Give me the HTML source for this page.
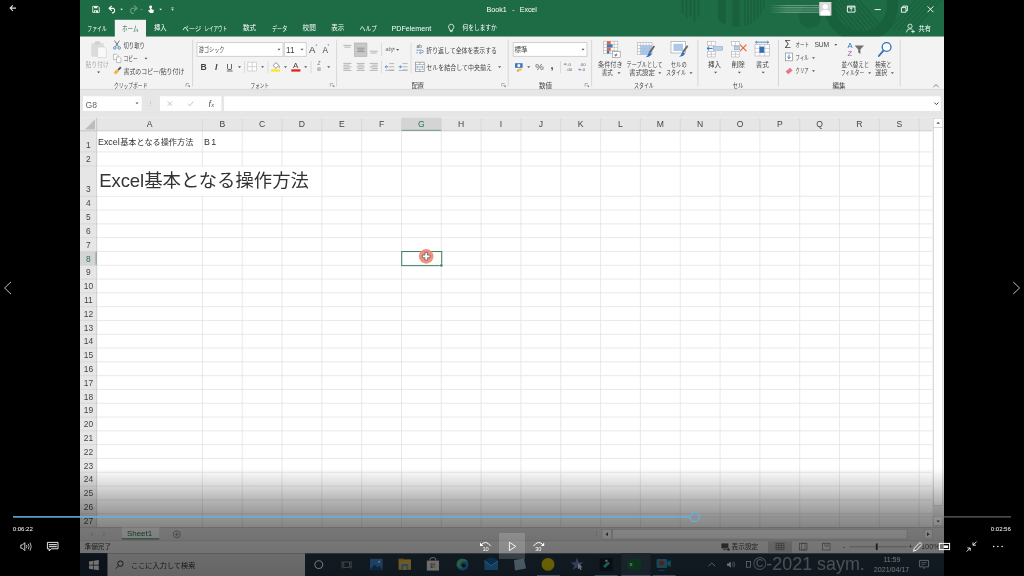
<!DOCTYPE html>
<html lang="ja"><head><meta charset="utf-8"><title>Excel video</title>
<style>
html,body{margin:0;padding:0;background:#000;}
body{width:1024px;height:576px;overflow:hidden;position:relative;font-family:"Liberation Sans","Noto Sans CJK JP",sans-serif;}
#stage{position:absolute;left:0;top:0;width:1024px;height:576px;overflow:hidden;background:#000;}
#stage svg{position:absolute;left:0;top:0;}
svg text{font-family:"Liberation Sans","Noto Sans CJK JP",sans-serif;}

</style></head><body>
<div id="stage">
<svg width="1024" height="576" viewBox="0 0 1024 576">
<defs><filter id="soft" x="0" y="0" width="1024" height="576" filterUnits="userSpaceOnUse" color-interpolation-filters="sRGB"><feGaussianBlur stdDeviation="0.38"/></filter></defs>
<g id="ui" filter="url(#soft)">
<rect x="80.00" y="0.00" width="864.00" height="576.00" fill="#fff"/>
<rect x="80.00" y="0.00" width="864.00" height="36.90" fill="#1e6c46"/>
<g clip-path="url(#tb)"><clipPath id="tb"><rect x="80" y="0" width="864" height="36.9"/></clipPath>
<circle cx="861" cy="5" r="31.5" fill="none" stroke="#19613d" stroke-width="11"/>
<clipPath id="rc"><circle cx="861" cy="5" r="26"/></clipPath><g clip-path="url(#rc)">
<line x1="822.00" y1="0.00" x2="852.00" y2="36.00" stroke="#19613d" stroke-width="1.7"/>
<line x1="826.60" y1="0.00" x2="856.60" y2="36.00" stroke="#19613d" stroke-width="1.7"/>
<line x1="831.20" y1="0.00" x2="861.20" y2="36.00" stroke="#19613d" stroke-width="1.7"/>
<line x1="835.80" y1="0.00" x2="865.80" y2="36.00" stroke="#19613d" stroke-width="1.7"/>
<line x1="840.40" y1="0.00" x2="870.40" y2="36.00" stroke="#19613d" stroke-width="1.7"/>
<line x1="845.00" y1="0.00" x2="875.00" y2="36.00" stroke="#19613d" stroke-width="1.7"/>
<line x1="849.60" y1="0.00" x2="879.60" y2="36.00" stroke="#19613d" stroke-width="1.7"/>
<line x1="854.20" y1="0.00" x2="884.20" y2="36.00" stroke="#19613d" stroke-width="1.7"/>
<line x1="858.80" y1="0.00" x2="888.80" y2="36.00" stroke="#19613d" stroke-width="1.7"/>
</g>
<line x1="916.00" y1="0.00" x2="888.00" y2="30.00" stroke="#19613d" stroke-width="1.8" opacity="0.8"/>
<line x1="921.00" y1="0.00" x2="893.00" y2="30.00" stroke="#19613d" stroke-width="1.8" opacity="0.8"/>
<line x1="926.00" y1="0.00" x2="898.00" y2="30.00" stroke="#19613d" stroke-width="1.8" opacity="0.8"/>
<line x1="931.00" y1="0.00" x2="903.00" y2="30.00" stroke="#19613d" stroke-width="1.8" opacity="0.8"/>
<line x1="936.00" y1="0.00" x2="908.00" y2="30.00" stroke="#19613d" stroke-width="1.8" opacity="0.8"/>
<line x1="941.00" y1="0.00" x2="913.00" y2="30.00" stroke="#19613d" stroke-width="1.8" opacity="0.8"/>
<clipPath id="bc"><circle cx="737" cy="-2" r="29"/></clipPath><g clip-path="url(#bc)">
<rect x="718.00" y="0.00" width="7.60" height="30.00" fill="#19613d"/>
<rect x="732.30" y="0.00" width="7.40" height="30.00" fill="#19613d"/>
<rect x="744.00" y="0.00" width="1.70" height="30.00" fill="#19613d"/>
<rect x="747.20" y="0.00" width="1.70" height="30.00" fill="#19613d"/>
<rect x="750.40" y="0.00" width="1.70" height="30.00" fill="#19613d"/>
<rect x="753.60" y="0.00" width="1.70" height="30.00" fill="#19613d"/>
<rect x="756.80" y="0.00" width="1.70" height="30.00" fill="#19613d"/>
<rect x="760.00" y="0.00" width="1.70" height="30.00" fill="#19613d"/>
<rect x="763.20" y="0.00" width="1.70" height="30.00" fill="#19613d"/>
</g>
<rect x="681.60" y="0.00" width="1.80" height="14.00" fill="#19613d"/>
<rect x="685.60" y="0.00" width="1.80" height="19.00" fill="#19613d"/>
<rect x="689.60" y="0.00" width="1.80" height="16.00" fill="#19613d"/>
<rect x="693.60" y="0.00" width="1.80" height="23.00" fill="#19613d"/>
<rect x="697.60" y="0.00" width="1.80" height="17.00" fill="#19613d"/>
<circle cx="810" cy="17" r="11" fill="#19613d" opacity="0.8"/>
</g>
<g transform="translate(96 9.4) scale(0.86) translate(-96 -9.4)">
<path d="M92.2 5.9h6.2l1.4 1.4v5.6h-7.6z" fill="none" stroke="#fff" stroke-width="0.9" />
<rect x="93.80" y="5.90" width="3.80" height="2.20" fill="#fff"/>
<rect x="93.80" y="10.40" width="4.40" height="2.50" fill="#fff"/>
<rect x="95.00" y="11.00" width="1.10" height="1.90" fill="#1e6c46"/>
</g>
<g transform="translate(112.4 9.3) scale(0.86) translate(-112.4 -9.3)">
<path d="M109 8.2h4.4a2.9 2.9 0 0 1 0 5.2h-1.6" fill="none" stroke="#fff" stroke-width="1.3" />
<path d="M111.6 5.4l-3 2.8 3 2.8" fill="none" stroke="#fff" stroke-width="1.3" />
</g>
<path d="M120.30 8.85h2.60l-1.30 1.50z" fill="#fff" />
<g opacity="0.35">
<path d="M136.6 8.2h-4.4a2.9 2.9 0 0 0 0 5.2h1.6" fill="none" stroke="#fff" stroke-width="1.1" />
<path d="M134 5.4l3 2.8-3 2.8" fill="none" stroke="#fff" stroke-width="1.1" />
<path d="M140.30 8.90h2.40l-1.20 1.40z" fill="#fff" />
</g>
<g transform="translate(150.8 9.3) scale(0.86) translate(-150.8 -9.3)">
<circle cx="150.6" cy="6.6" r="1.7" fill="#fff"/>
<path d="M149.7 6.4v4.2l-1.5-.6-.6.9 2.4 2.6h3.6l.9-3.4-3-.9v-2.8z" fill="#fff" />
</g>
<path d="M159.30 8.85h2.60l-1.30 1.50z" fill="#fff" />
<line x1="171.30" y1="7.90" x2="173.70" y2="7.90" stroke="#fff" stroke-width="0.7"/>
<path d="M171.30 9.30h2.40l-1.20 1.40z" fill="#fff" />
<text x="486.40" y="11.99" font-size="7.2" fill="#fff">Book1</text>
<text x="512.20" y="11.99" font-size="7.2" fill="#fff">-</text>
<text x="519.70" y="11.99" font-size="7.2" fill="#fff" letter-spacing="-0.1">Excel</text>
<line x1="770.00" y1="5.60" x2="819.00" y2="5.60" stroke="#9cc4b0" stroke-width="1.0" opacity="0.6"/>
<line x1="770.00" y1="7.80" x2="819.00" y2="7.80" stroke="#9cc4b0" stroke-width="1.0" opacity="0.75"/>
<line x1="770.00" y1="10.00" x2="819.00" y2="10.00" stroke="#9cc4b0" stroke-width="1.0" opacity="0.6"/>
<line x1="770.00" y1="12.20" x2="819.00" y2="12.20" stroke="#9cc4b0" stroke-width="1.0" opacity="0.75"/>
<linearGradient id="un" x1="0" x2="1"><stop offset="0" stop-color="#1e6c46" stop-opacity="1"/><stop offset="0.35" stop-color="#1e6c46" stop-opacity="0"/></linearGradient>
<rect x="769.00" y="4.00" width="50.00" height="10.00" fill="url(#un)"/>
<rect x="819.20" y="2.00" width="12.20" height="13.60" fill="#d9d9d9"/>
<circle cx="825.3" cy="6.6" r="2.6" fill="#fff"/>
<path d="M820.6 15.6v-2.2q0-3.4 4.7-3.4t4.7 3.4v2.2z" fill="#fff" />
<path d="M847.4 6.1h7.6v6h-7.6z" fill="none" stroke="#fff" stroke-width="0.9" />
<path d="M851.2 7.6v3.2M849.7 9.1l1.5-1.5 1.5 1.5" fill="none" stroke="#fff" stroke-width="0.8" />
<line x1="847.40" y1="7.00" x2="855.00" y2="7.00" stroke="#fff" stroke-width="0.9"/>
<line x1="874.60" y1="9.60" x2="880.80" y2="9.60" stroke="#fff" stroke-width="0.9"/>
<path d="M901.4 7.6h4.6v4.6h-4.6z" fill="none" stroke="#fff" stroke-width="0.9" />
<path d="M902.8 7.4v-1.3h4.6v4.6h-1.3" fill="none" stroke="#fff" stroke-width="0.9" />
<path d="M927.6 6.4l5.8 5.8M933.4 6.4l-5.8 5.8" fill="none" stroke="#fff" stroke-width="0.95" />
<rect x="114.80" y="19.80" width="31.20" height="18.40" fill="#f3f3f3"/>
<text x="87.30" y="30.56" font-size="6.6" fill="#fff" textLength="19.4" lengthAdjust="spacingAndGlyphs">ファイル</text>
<text x="121.90" y="30.56" font-size="6.6" fill="#1e6c46" textLength="16.6" lengthAdjust="spacingAndGlyphs">ホーム</text>
<text x="154.00" y="30.49" font-size="6.6" fill="#fff" textLength="12.6" lengthAdjust="spacingAndGlyphs">挿入</text>
<text x="182.50" y="30.56" font-size="6.6" fill="#fff" textLength="18.8" lengthAdjust="spacingAndGlyphs">ページ</text>
<text x="204.50" y="30.56" font-size="6.6" fill="#fff" textLength="22.5" lengthAdjust="spacingAndGlyphs">レイアウト</text>
<text x="243.00" y="30.49" font-size="6.6" fill="#fff" textLength="13.1" lengthAdjust="spacingAndGlyphs">数式</text>
<text x="272.00" y="30.56" font-size="6.6" fill="#fff" textLength="15.2" lengthAdjust="spacingAndGlyphs">データ</text>
<text x="302.50" y="30.49" font-size="6.6" fill="#fff" textLength="13.3" lengthAdjust="spacingAndGlyphs">校閲</text>
<text x="331.20" y="30.49" font-size="6.6" fill="#fff" textLength="13.1" lengthAdjust="spacingAndGlyphs">表示</text>
<text x="359.80" y="30.56" font-size="6.6" fill="#fff" textLength="17.1" lengthAdjust="spacingAndGlyphs">ヘルプ</text>
<text x="391.50" y="30.57" font-size="7.15" fill="#fff">PDFelement</text>
<path d="M451.2 24.2a2.7 2.7 0 0 1 1.5 4.9v1.3h-3v-1.3a2.7 2.7 0 0 1 1.5-4.9z" fill="none" stroke="#fff" stroke-width="0.8" />
<line x1="450.00" y1="31.60" x2="452.40" y2="31.60" stroke="#fff" stroke-width="0.8"/>
<text x="462.50" y="30.49" font-size="6.6" fill="#fff" textLength="34.3" lengthAdjust="spacingAndGlyphs">何をしますか</text>
<circle cx="910" cy="26.2" r="2.1" fill="none" stroke="#fff" stroke-width="0.8"/>
<path d="M906.4 32.4q.4-3.6 3.6-3.6 1.6 0 2.4.9M913 29.8v3.4M911.3 31.5h3.4" fill="none" stroke="#fff" stroke-width="0.8" />
<text x="918.40" y="30.59" font-size="6.6" fill="#fff" textLength="12.5" lengthAdjust="spacingAndGlyphs">共有</text>
<rect x="80.00" y="36.60" width="864.00" height="52.60" fill="#f3f3f3"/>
<rect x="80.00" y="89.20" width="864.00" height="28.40" fill="#e6e6e6"/>
<line x1="80.00" y1="89.40" x2="944.00" y2="89.40" stroke="#d6d6d6" stroke-width="0.8"/>
<line x1="192.60" y1="39.50" x2="192.60" y2="86.50" stroke="#d4d4d4" stroke-width="0.9"/>
<line x1="336.60" y1="39.50" x2="336.60" y2="86.50" stroke="#d4d4d4" stroke-width="0.9"/>
<line x1="508.20" y1="39.50" x2="508.20" y2="86.50" stroke="#d4d4d4" stroke-width="0.9"/>
<line x1="591.60" y1="39.50" x2="591.60" y2="86.50" stroke="#d4d4d4" stroke-width="0.9"/>
<line x1="697.90" y1="39.50" x2="697.90" y2="86.50" stroke="#d4d4d4" stroke-width="0.9"/>
<line x1="778.50" y1="39.50" x2="778.50" y2="86.50" stroke="#d4d4d4" stroke-width="0.9"/>
<line x1="900.20" y1="39.50" x2="900.20" y2="86.50" stroke="#d4d4d4" stroke-width="0.9"/>
<path d="M189.0 83.5h-3v3" fill="none" stroke="#888" stroke-width="0.6" />
<path d="M187.6 85.1l1.8 1.8" fill="none" stroke="#888" stroke-width="0.6" />
<path d="M190.0 87.5v-1.9h-1.9z" fill="#777" />
<path d="M333.3 83.5h-3v3" fill="none" stroke="#888" stroke-width="0.6" />
<path d="M331.9 85.1l1.8 1.8" fill="none" stroke="#888" stroke-width="0.6" />
<path d="M334.3 87.5v-1.9h-1.9z" fill="#777" />
<path d="M504.7 83.5h-3v3" fill="none" stroke="#888" stroke-width="0.6" />
<path d="M503.3 85.1l1.8 1.8" fill="none" stroke="#888" stroke-width="0.6" />
<path d="M505.7 87.5v-1.9h-1.9z" fill="#777" />
<path d="M588.0 83.5h-3v3" fill="none" stroke="#888" stroke-width="0.6" />
<path d="M586.6 85.1l1.8 1.8" fill="none" stroke="#888" stroke-width="0.6" />
<path d="M589.0 87.5v-1.9h-1.9z" fill="#777" />
<path d="M933.4 87l2.6-2.4 2.6 2.4" fill="none" stroke="#666" stroke-width="0.8" />
<g opacity="0.55">
<rect x="91.20" y="43.20" width="12.60" height="13.60" fill="#c9c9c9" rx="0.8"/>
<rect x="94.80" y="41.20" width="5.40" height="3.20" fill="#b5b5b5" rx="0.8"/>
<path d="M97.6 47h6.4l2.4 2.4v8.2h-8.8z" fill="#fff" stroke="#b9b9b9" stroke-width="0.7" />
</g>
<text x="85.80" y="66.92" font-size="6.4" fill="#a9a9a9" textLength="22.9" lengthAdjust="spacingAndGlyphs">貼り付け</text>
<path d="M97.10 71.55h3.00l-1.50 1.70z" fill="#555" />
<path d="M114.6 40.6l3.8 6M119.4 40.6l-3.8 6" fill="none" stroke="#555" stroke-width="0.8" />
<circle cx="114.8" cy="47.9" r="1.3" fill="none" stroke="#3b78c4" stroke-width="0.8"/><circle cx="119.2" cy="47.9" r="1.3" fill="none" stroke="#3b78c4" stroke-width="0.8"/>
<text x="123.50" y="48.02" font-size="6.4" fill="#444" textLength="21.3" lengthAdjust="spacingAndGlyphs">切り取り</text>
<path d="M113.6 54.2h3l1.4 1.4v4h-4.4z" fill="#fff" stroke="#999" stroke-width="0.6" />
<path d="M116.6 57h3l1.4 1.4v4.2h-4.4z" fill="#fff" stroke="#999" stroke-width="0.6" />
<text x="123.50" y="61.12" font-size="6.4" fill="#444" textLength="14.1" lengthAdjust="spacingAndGlyphs">コピー</text>
<path d="M144.50 57.75h3.00l-1.50 1.70z" fill="#555" />
<path d="M113.6 72.2l3.6-3.2 2 2.2-3.6 3.2z" fill="#f0b54a" />
<path d="M117.6 69.2l2.6-2.6 1.3 1.3-2.6 2.6z" fill="#555" />
<text x="123.50" y="74.32" font-size="6.4" fill="#444" textLength="60.8" lengthAdjust="spacingAndGlyphs">書式のコピー/貼り付け</text>
<text x="114.00" y="87.82" font-size="6.4" fill="#444" textLength="33.4" lengthAdjust="spacingAndGlyphs">クリップボード</text>
<rect x="197.00" y="42.60" width="86.00" height="13.70" fill="#fff" stroke="#c6c6c6" stroke-width="0.8"/>
<text x="198.80" y="52.22" font-size="6.4" fill="#444" textLength="25.7" lengthAdjust="spacingAndGlyphs">游ゴシック</text>
<path d="M277.50 48.85h3.00l-1.50 1.70z" fill="#555" />
<rect x="284.30" y="42.60" width="21.90" height="13.70" fill="#fff" stroke="#c6c6c6" stroke-width="0.8"/>
<text x="286.00" y="52.75" font-size="8.2" fill="#444" font-family="Liberation Serif">11</text>
<path d="M300.50 48.85h3.00l-1.50 1.70z" fill="#555" />
<text x="309.00" y="53.36" font-size="9.6" fill="#444">A</text>
<path d="M316.4 44.2l1 1.4h-2z" fill="#3b78c4" />
<text x="322.40" y="53.35" font-size="8.2" fill="#444">A</text>
<path d="M328.4 45.8l1-1.4h-2z" fill="#3b78c4" />
<text x="200.60" y="69.90" font-size="8.6" fill="#444" font-weight="bold">B</text>
<text x="214.90" y="69.90" font-size="8.6" fill="#444" font-weight="bold" font-style="italic" font-family="Liberation Serif">I</text>
<text x="226.60" y="69.52" font-size="8.4" fill="#444">U</text>
<line x1="226.80" y1="71.00" x2="232.60" y2="71.00" stroke="#444" stroke-width="0.8"/>
<path d="M238.00 66.35h3.00l-1.50 1.70z" fill="#555" />
<line x1="244.50" y1="61.00" x2="244.50" y2="73.00" stroke="#d4d4d4" stroke-width="0.8"/>
<rect x="247.80" y="62.20" width="8.80" height="8.80" fill="#fff" stroke="#c4c4c4" stroke-width="0.7"/>
<line x1="252.20" y1="62.20" x2="252.20" y2="71.00" stroke="#c4c4c4" stroke-width="0.7"/>
<line x1="247.80" y1="66.60" x2="256.60" y2="66.60" stroke="#c4c4c4" stroke-width="0.7"/>
<path d="M261.10 66.35h3.00l-1.50 1.70z" fill="#555" />
<line x1="268.00" y1="61.00" x2="268.00" y2="73.00" stroke="#d4d4d4" stroke-width="0.8"/>
<path d="M273.2 65.6l2.6-3 3 2.8-2.8 3z" fill="#fff" stroke="#666" stroke-width="0.7" />
<path d="M279.4 65.8q1 1.5 0 2.2-1-.7 0-2.2z" fill="#3b78c4" />
<rect x="271.00" y="69.30" width="9.10" height="2.30" fill="#ffe61a"/>
<path d="M284.00 66.35h3.00l-1.50 1.70z" fill="#555" />
<text x="293.10" y="68.08" font-size="8.0" fill="#444">A</text>
<rect x="291.30" y="69.30" width="9.10" height="2.30" fill="#e8201c"/>
<path d="M304.20 66.35h3.00l-1.50 1.70z" fill="#555" />
<line x1="311.00" y1="61.00" x2="311.00" y2="73.00" stroke="#d4d4d4" stroke-width="0.8"/>
<text x="317.60" y="65.46" font-size="4.6" fill="#777" font-style="italic">Z</text>
<rect x="317.20" y="67.20" width="3.60" height="3.80" fill="#bdbdbd"/>
<path d="M327.20 66.35h3.00l-1.50 1.70z" fill="#555" />
<text x="250.60" y="87.82" font-size="6.4" fill="#444" textLength="18.3" lengthAdjust="spacingAndGlyphs">フォント</text>
<line x1="343.40" y1="45.40" x2="351.40" y2="45.40" stroke="#a6a6a6" stroke-width="0.8"/>
<line x1="344.40" y1="47.20" x2="350.40" y2="47.20" stroke="#a6a6a6" stroke-width="0.8"/>
<rect x="354.60" y="43.00" width="12.30" height="13.30" fill="#c8c8c8" stroke="#aaa" stroke-width="0.6"/>
<line x1="356.80" y1="48.20" x2="364.80" y2="48.20" stroke="#8a8a8a" stroke-width="0.8"/>
<line x1="357.80" y1="49.90" x2="363.80" y2="49.90" stroke="#8a8a8a" stroke-width="0.8"/>
<line x1="356.80" y1="51.60" x2="364.80" y2="51.60" stroke="#8a8a8a" stroke-width="0.8"/>
<line x1="369.80" y1="51.20" x2="377.80" y2="51.20" stroke="#a6a6a6" stroke-width="0.8"/>
<line x1="370.80" y1="53.00" x2="376.80" y2="53.00" stroke="#a6a6a6" stroke-width="0.8"/>
<line x1="381.50" y1="43.00" x2="381.50" y2="56.00" stroke="#d4d4d4" stroke-width="0.8"/>
<text x="385.60" y="51.22" font-size="5.6" fill="#666" font-style="italic">ab</text>
<path d="M391.4 52.6l2.6-4.6M394 48l-1.6.5M394 48l.2 1.6" fill="none" stroke="#777" stroke-width="0.7" />
<path d="M396.10 48.95h3.00l-1.50 1.70z" fill="#555" />
<line x1="411.00" y1="43.00" x2="411.00" y2="73.00" stroke="#d4d4d4" stroke-width="0.8"/>
<text x="416.60" y="47.93" font-size="4.8" fill="#555">ab</text>
<path d="M416.4 50.2h5.2q1.6 0 1.6 1.3t-1.6 1.3h-1.6" fill="none" stroke="#3b78c4" stroke-width="0.7" />
<path d="M420.8 51.6l-1.4 1.2 1.4 1.2" fill="none" stroke="#3b78c4" stroke-width="0.7" />
<line x1="416.40" y1="52.80" x2="418.00" y2="52.80" stroke="#777" stroke-width="0.7"/>
<text x="426.30" y="52.52" font-size="6.4" fill="#444" textLength="70.7" lengthAdjust="spacingAndGlyphs">折り返して全体を表示する</text>
<line x1="343.40" y1="63.40" x2="351.40" y2="63.40" stroke="#a6a6a6" stroke-width="0.8"/>
<line x1="343.40" y1="65.15" x2="349.40" y2="65.15" stroke="#a6a6a6" stroke-width="0.8"/>
<line x1="343.40" y1="66.90" x2="351.40" y2="66.90" stroke="#a6a6a6" stroke-width="0.8"/>
<line x1="343.40" y1="68.65" x2="349.40" y2="68.65" stroke="#a6a6a6" stroke-width="0.8"/>
<line x1="343.40" y1="70.40" x2="351.40" y2="70.40" stroke="#a6a6a6" stroke-width="0.8"/>
<line x1="356.70" y1="63.40" x2="364.70" y2="63.40" stroke="#a6a6a6" stroke-width="0.8"/>
<line x1="357.70" y1="65.15" x2="363.70" y2="65.15" stroke="#a6a6a6" stroke-width="0.8"/>
<line x1="356.70" y1="66.90" x2="364.70" y2="66.90" stroke="#a6a6a6" stroke-width="0.8"/>
<line x1="357.70" y1="68.65" x2="363.70" y2="68.65" stroke="#a6a6a6" stroke-width="0.8"/>
<line x1="356.70" y1="70.40" x2="364.70" y2="70.40" stroke="#a6a6a6" stroke-width="0.8"/>
<line x1="369.70" y1="63.40" x2="377.70" y2="63.40" stroke="#a6a6a6" stroke-width="0.8"/>
<line x1="371.70" y1="65.15" x2="377.70" y2="65.15" stroke="#a6a6a6" stroke-width="0.8"/>
<line x1="369.70" y1="66.90" x2="377.70" y2="66.90" stroke="#a6a6a6" stroke-width="0.8"/>
<line x1="371.70" y1="68.65" x2="377.70" y2="68.65" stroke="#a6a6a6" stroke-width="0.8"/>
<line x1="369.70" y1="70.40" x2="377.70" y2="70.40" stroke="#a6a6a6" stroke-width="0.8"/>
<line x1="381.50" y1="61.00" x2="381.50" y2="73.00" stroke="#d4d4d4" stroke-width="0.8"/>
<line x1="389.20" y1="63.60" x2="394.20" y2="63.60" stroke="#a6a6a6" stroke-width="0.8"/>
<line x1="389.20" y1="66.80" x2="394.20" y2="66.80" stroke="#a6a6a6" stroke-width="0.8"/>
<line x1="389.20" y1="70.00" x2="394.20" y2="70.00" stroke="#a6a6a6" stroke-width="0.8"/>
<line x1="385.40" y1="70.40" x2="394.20" y2="70.40" stroke="#a6a6a6" stroke-width="0.8"/>
<path d="M388.4 66.8h-3M386.6 65.4l-1.5 1.4 1.5 1.4" fill="none" stroke="#3b78c4" stroke-width="0.8" />
<line x1="402.60" y1="63.60" x2="407.60" y2="63.60" stroke="#a6a6a6" stroke-width="0.8"/>
<line x1="402.60" y1="66.80" x2="407.60" y2="66.80" stroke="#a6a6a6" stroke-width="0.8"/>
<line x1="402.60" y1="70.00" x2="407.60" y2="70.00" stroke="#a6a6a6" stroke-width="0.8"/>
<line x1="398.60" y1="70.40" x2="407.60" y2="70.40" stroke="#a6a6a6" stroke-width="0.8"/>
<path d="M398.6 66.8h3M399.9 65.4l1.5 1.4-1.5 1.4" fill="none" stroke="#3b78c4" stroke-width="0.8" />
<rect x="415.40" y="62.20" width="8.80" height="9.40" fill="#fff" stroke="#8c8c8c" stroke-width="0.7"/>
<line x1="415.40" y1="64.60" x2="424.20" y2="64.60" stroke="#8c8c8c" stroke-width="0.6"/>
<line x1="415.40" y1="69.20" x2="424.20" y2="69.20" stroke="#8c8c8c" stroke-width="0.6"/>
<line x1="419.80" y1="62.20" x2="419.80" y2="64.60" stroke="#8c8c8c" stroke-width="0.6"/>
<line x1="419.80" y1="69.20" x2="419.80" y2="71.60" stroke="#8c8c8c" stroke-width="0.6"/>
<path d="M416.6 66.9h6.4M417.6 66l-1 .9 1 .9M422 66l1 .9-1 .9" fill="none" stroke="#3b78c4" stroke-width="0.6" />
<text x="426.30" y="69.52" font-size="6.4" fill="#444" textLength="65.6" lengthAdjust="spacingAndGlyphs">セルを結合して中央揃え</text>
<path d="M498.10 66.35h3.00l-1.50 1.70z" fill="#555" />
<text x="411.40" y="87.82" font-size="6.4" fill="#444" textLength="12.5" lengthAdjust="spacingAndGlyphs">配置</text>
<rect x="513.20" y="42.60" width="73.80" height="13.70" fill="#fff" stroke="#c6c6c6" stroke-width="0.8"/>
<text x="514.60" y="52.22" font-size="6.4" fill="#444" textLength="13.0" lengthAdjust="spacingAndGlyphs">標準</text>
<path d="M581.50 48.85h3.00l-1.50 1.70z" fill="#555" />
<rect x="515.00" y="63.20" width="7.60" height="4.60" fill="#3b78c4"/>
<ellipse cx="518.8" cy="65.5" rx="1.5" ry="1.6" fill="#fff"/>
<circle cx="520.2" cy="69.6" r="1.5" fill="#f0c36a"/><circle cx="518" cy="70.6" r="1.3" fill="#e7b04e"/>
<path d="M527.20 66.35h3.00l-1.50 1.70z" fill="#555" />
<text x="535.20" y="70.36" font-size="9.6" fill="#555">%</text>
<text x="550.60" y="68.56" font-size="11" fill="#444" font-weight="bold" font-family="Liberation Serif">,</text>
<line x1="560.50" y1="61.00" x2="560.50" y2="73.00" stroke="#d4d4d4" stroke-width="0.8"/>
<text x="567.20" y="65.78" font-size="4.4" fill="#666">.0</text>
<text x="566.20" y="71.18" font-size="4.4" fill="#666">.00</text>
<path d="M564.4 64.2h2.4M565.3 63.2l-1 1 1 1" fill="none" stroke="#3b78c4" stroke-width="0.7" />
<text x="579.60" y="65.78" font-size="4.4" fill="#666">.00</text>
<text x="581.60" y="71.18" font-size="4.4" fill="#666">.0</text>
<path d="M578.2 69.6h2.6M579.9 68.6l1 1-1 1" fill="none" stroke="#3b78c4" stroke-width="0.7" />
<text x="539.00" y="87.82" font-size="6.4" fill="#444" textLength="13.0" lengthAdjust="spacingAndGlyphs">数値</text>
<rect x="603.40" y="41.20" width="14.40" height="12.40" fill="#fff" stroke="#b0b0b0" stroke-width="0.6"/>
<line x1="607.00" y1="41.20" x2="607.00" y2="53.60" stroke="#b0b0b0" stroke-width="0.6"/>
<line x1="610.60" y1="41.20" x2="610.60" y2="53.60" stroke="#b0b0b0" stroke-width="0.6"/>
<line x1="614.20" y1="41.20" x2="614.20" y2="53.60" stroke="#b0b0b0" stroke-width="0.6"/>
<line x1="603.40" y1="44.30" x2="617.80" y2="44.30" stroke="#b0b0b0" stroke-width="0.6"/>
<line x1="603.40" y1="47.40" x2="617.80" y2="47.40" stroke="#b0b0b0" stroke-width="0.6"/>
<line x1="603.40" y1="50.50" x2="617.80" y2="50.50" stroke="#b0b0b0" stroke-width="0.6"/>
<rect x="607.00" y="41.20" width="3.60" height="3.10" fill="#e8613c"/>
<rect x="607.00" y="44.30" width="5.60" height="3.10" fill="#3b78c4"/>
<rect x="607.00" y="47.40" width="3.60" height="3.10" fill="#e8613c"/>
<rect x="607.00" y="50.50" width="2.40" height="3.10" fill="#3b78c4"/>
<rect x="612.60" y="51.60" width="7.60" height="5.80" fill="#fff" stroke="#8a8a8a" stroke-width="0.6"/>
<text x="614.40" y="56.54" font-size="5.4" fill="#444">≠</text>
<text x="598.10" y="67.12" font-size="6.4" fill="#444" textLength="24.4" lengthAdjust="spacingAndGlyphs">条件付き</text>
<text x="601.70" y="75.42" font-size="6.4" fill="#444" textLength="11.0" lengthAdjust="spacingAndGlyphs">書式</text>
<path d="M617.50 72.25h3.00l-1.50 1.70z" fill="#555" />
<rect x="637.40" y="42.40" width="14.60" height="12.20" fill="#fff" stroke="#b0b0b0" stroke-width="0.6"/>
<line x1="640.32" y1="42.40" x2="640.32" y2="54.60" stroke="#b0b0b0" stroke-width="0.6"/>
<line x1="643.24" y1="42.40" x2="643.24" y2="54.60" stroke="#b0b0b0" stroke-width="0.6"/>
<line x1="646.16" y1="42.40" x2="646.16" y2="54.60" stroke="#b0b0b0" stroke-width="0.6"/>
<line x1="649.08" y1="42.40" x2="649.08" y2="54.60" stroke="#b0b0b0" stroke-width="0.6"/>
<line x1="637.40" y1="45.45" x2="652.00" y2="45.45" stroke="#b0b0b0" stroke-width="0.6"/>
<line x1="637.40" y1="48.50" x2="652.00" y2="48.50" stroke="#b0b0b0" stroke-width="0.6"/>
<line x1="637.40" y1="51.55" x2="652.00" y2="51.55" stroke="#b0b0b0" stroke-width="0.6"/>
<rect x="640.30" y="45.40" width="11.70" height="9.20" fill="#9cc0e6" opacity="0.85"/>
<path d="M648.8 52l4.8-6.4 1.4 1-4.6 6.6z" fill="#666" />
<path d="M645.2 57.2q2.4-.4 3.6-5l2.8 1.8q-1.6 3.2-6.4 3.2z" fill="#2f6fbd" />
<text x="626.50" y="67.12" font-size="6.4" fill="#444" textLength="36.0" lengthAdjust="spacingAndGlyphs">テーブルとして</text>
<text x="629.00" y="75.42" font-size="6.4" fill="#444" textLength="25.9" lengthAdjust="spacingAndGlyphs">書式設定</text>
<path d="M658.30 72.25h3.00l-1.50 1.70z" fill="#555" />
<rect x="671.00" y="41.60" width="14.40" height="11.40" fill="#fff" stroke="#9a9a9a" stroke-width="0.6"/>
<rect x="673.40" y="43.80" width="9.60" height="7.20" fill="#a9c8ea"/>
<path d="M682.2 51.6l4.8-6.4 1.4 1-4.6 6.6z" fill="#666" />
<path d="M678.6 56.8q2.4-.4 3.6-5l2.8 1.8q-1.6 3.2-6.4 3.2z" fill="#2f6fbd" />
<text x="670.80" y="67.12" font-size="6.4" fill="#444" textLength="15.9" lengthAdjust="spacingAndGlyphs">セルの</text>
<text x="665.90" y="75.42" font-size="6.4" fill="#444" textLength="20.2" lengthAdjust="spacingAndGlyphs">スタイル</text>
<path d="M689.50 72.25h3.00l-1.50 1.70z" fill="#555" />
<text x="634.00" y="87.82" font-size="6.4" fill="#444" textLength="19.8" lengthAdjust="spacingAndGlyphs">スタイル</text>
<rect x="707.60" y="41.40" width="7.60" height="4.20" fill="#fff" stroke="#b0b0b0" stroke-width="0.6"/>
<line x1="711.40" y1="41.40" x2="711.40" y2="45.60" stroke="#b0b0b0" stroke-width="0.6"/>
<rect x="707.60" y="51.60" width="7.60" height="5.40" fill="#fff" stroke="#b0b0b0" stroke-width="0.6"/>
<line x1="711.40" y1="51.60" x2="711.40" y2="57.00" stroke="#b0b0b0" stroke-width="0.6"/>
<line x1="707.60" y1="54.30" x2="715.20" y2="54.30" stroke="#b0b0b0" stroke-width="0.6"/>
<rect x="713.40" y="46.60" width="9.20" height="3.60" fill="#b8d2ec" stroke="#7a9cc4" stroke-width="0.5"/>
<path d="M712.6 48.4h-5.6M709.2 46.4l-2.2 2 2.2 2" fill="none" stroke="#2f6fbd" stroke-width="1.0" />
<text x="707.90" y="66.92" font-size="6.4" fill="#444" textLength="13.0" lengthAdjust="spacingAndGlyphs">挿入</text>
<path d="M714.10 71.75h3.00l-1.50 1.70z" fill="#555" />
<rect x="731.60" y="41.40" width="7.60" height="4.20" fill="#fff" stroke="#b0b0b0" stroke-width="0.6"/>
<line x1="735.40" y1="41.40" x2="735.40" y2="45.60" stroke="#b0b0b0" stroke-width="0.6"/>
<rect x="731.60" y="51.60" width="7.60" height="5.40" fill="#fff" stroke="#b0b0b0" stroke-width="0.6"/>
<line x1="735.40" y1="51.60" x2="735.40" y2="57.00" stroke="#b0b0b0" stroke-width="0.6"/>
<line x1="731.60" y1="54.30" x2="739.20" y2="54.30" stroke="#b0b0b0" stroke-width="0.6"/>
<rect x="734.40" y="46.20" width="5.20" height="3.60" fill="#b8d2ec" stroke="#7a9cc4" stroke-width="0.5"/>
<path d="M740 44.6l6.4 6.6M746.4 44.6l-6.4 6.6" fill="none" stroke="#e8613c" stroke-width="1.1" />
<text x="731.60" y="66.92" font-size="6.4" fill="#444" textLength="13.4" lengthAdjust="spacingAndGlyphs">削除</text>
<path d="M737.90 71.75h3.00l-1.50 1.70z" fill="#555" />
<rect x="755.00" y="44.60" width="14.60" height="11.40" fill="#fff" stroke="#b0b0b0" stroke-width="0.6"/>
<line x1="759.87" y1="44.60" x2="759.87" y2="56.00" stroke="#b0b0b0" stroke-width="0.6"/>
<line x1="764.73" y1="44.60" x2="764.73" y2="56.00" stroke="#b0b0b0" stroke-width="0.6"/>
<line x1="755.00" y1="48.40" x2="769.60" y2="48.40" stroke="#b0b0b0" stroke-width="0.6"/>
<line x1="755.00" y1="52.20" x2="769.60" y2="52.20" stroke="#b0b0b0" stroke-width="0.6"/>
<rect x="759.40" y="46.60" width="4.80" height="6.20" fill="#2f6fbd"/>
<path d="M755.6 42.2h13M757 41l-1.4 1.2 1.4 1.2M767.2 41l1.4 1.2-1.4 1.2" fill="none" stroke="#2f6fbd" stroke-width="0.8" />
<text x="755.80" y="66.92" font-size="6.4" fill="#444" textLength="13.0" lengthAdjust="spacingAndGlyphs">書式</text>
<path d="M761.70 71.75h3.00l-1.50 1.70z" fill="#555" />
<text x="732.40" y="87.82" font-size="6.4" fill="#444" textLength="11.0" lengthAdjust="spacingAndGlyphs">セル</text>
<text x="784.60" y="48.34" font-size="10.4" fill="#444">Σ</text>
<text x="795.60" y="47.42" font-size="6.4" fill="#444" textLength="13.3" lengthAdjust="spacingAndGlyphs">オート</text>
<text x="814.40" y="47.31" font-size="6.7" fill="#444" letter-spacing="-0.15">SUM</text>
<path d="M834.30 44.05h3.00l-1.50 1.70z" fill="#555" />
<rect x="785.40" y="53.00" width="7.20" height="7.80" fill="#fff" stroke="#8a8a8a" stroke-width="0.7"/>
<path d="M789 54.6v4M787.4 57l1.6 1.6 1.6-1.6" fill="none" stroke="#2f6fbd" stroke-width="0.9" />
<text x="795.60" y="60.42" font-size="6.4" fill="#444" textLength="13.1" lengthAdjust="spacingAndGlyphs">フィル</text>
<path d="M812.00 57.25h3.00l-1.50 1.70z" fill="#555" />
<path d="M785.6 71.6l4.4-3.8 2.6 2.6-4.4 3.8z" fill="#e8758c" />
<text x="795.60" y="73.42" font-size="6.4" fill="#444" textLength="12.9" lengthAdjust="spacingAndGlyphs">クリア</text>
<path d="M812.00 70.25h3.00l-1.50 1.70z" fill="#555" />
<text x="847.40" y="47.94" font-size="7.6" fill="#2f6fbd">A</text>
<text x="847.60" y="55.54" font-size="7.6" fill="#9a57b5">Z</text>
<path d="M854.6 45.4h9.4l-3.6 4v4.6l-2.2-1.4v-3.2z" fill="#707070" />
<text x="841.60" y="67.12" font-size="6.4" fill="#444" textLength="27.8" lengthAdjust="spacingAndGlyphs">並べ替えと</text>
<text x="841.00" y="75.42" font-size="6.4" fill="#444" textLength="23.1" lengthAdjust="spacingAndGlyphs">フィルター</text>
<path d="M868.10 72.25h3.00l-1.50 1.70z" fill="#555" />
<circle cx="886.6" cy="47" r="4.4" fill="#fff" stroke="#2f6fbd" stroke-width="1.3"/>
<line x1="883.40" y1="50.60" x2="878.80" y2="56.00" stroke="#2f6fbd" stroke-width="1.8" stroke-linecap="round"/>
<text x="875.30" y="67.12" font-size="6.4" fill="#444" textLength="16.5" lengthAdjust="spacingAndGlyphs">検索と</text>
<text x="875.30" y="75.42" font-size="6.4" fill="#444" textLength="11.8" lengthAdjust="spacingAndGlyphs">選択</text>
<path d="M890.90 72.25h3.00l-1.50 1.70z" fill="#555" />
<text x="832.50" y="87.82" font-size="6.4" fill="#444" textLength="12.9" lengthAdjust="spacingAndGlyphs">編集</text>
<rect x="83.00" y="96.30" width="58.60" height="14.60" fill="#fff"/>
<text x="85.60" y="108.10" font-size="8.6" fill="#666">G8</text>
<path d="M135.50 102.55h3.00l-1.50 1.70z" fill="#555" />
<circle cx="150.4" cy="101.6" r="0.45" fill="#999"/>
<circle cx="150.4" cy="103.5" r="0.45" fill="#999"/>
<circle cx="150.4" cy="105.4" r="0.45" fill="#999"/>
<rect x="159.90" y="96.30" width="61.40" height="14.60" fill="#fff"/>
<path d="M167.6 101.4l4.4 4.4M172 101.4l-4.4 4.4" fill="none" stroke="#b5b5b5" stroke-width="0.8" />
<path d="M188 103.8l1.8 2 3.6-4.4" fill="none" stroke="#b5b5b5" stroke-width="0.8" />
<text x="208.60" y="106.70" font-size="8.6" fill="#555" font-style="italic" font-family="Liberation Serif">f</text>
<text x="211.20" y="106.82" font-size="5.6" fill="#555" font-style="italic" font-family="Liberation Serif">x</text>
<rect x="224.10" y="96.30" width="716.60" height="14.60" fill="#fff"/>
<path d="M934.4 102.6l2 2 2-2" fill="none" stroke="#444" stroke-width="1.0" />
<rect x="80.00" y="117.60" width="864.00" height="13.20" fill="#e6e6e6"/>
<rect x="80.00" y="117.60" width="16.70" height="410.00" fill="#e6e6e6"/>
<rect x="96.70" y="130.80" width="835.70" height="396.70" fill="#fff"/>
<rect x="401.50" y="117.60" width="39.82" height="13.20" fill="#d4d4d4"/>
<line x1="401.50" y1="130.40" x2="441.32" y2="130.40" stroke="#217346" stroke-width="1.0"/>
<rect x="80.00" y="251.45" width="16.70" height="13.80" fill="#d4d4d4"/>
<line x1="96.30" y1="251.45" x2="96.30" y2="265.25" stroke="#217346" stroke-width="1.0"/>
<line x1="202.40" y1="130.80" x2="202.40" y2="527.50" stroke="#e3e3e3" stroke-width="0.8"/>
<line x1="242.22" y1="130.80" x2="242.22" y2="527.50" stroke="#e3e3e3" stroke-width="0.8"/>
<line x1="282.04" y1="130.80" x2="282.04" y2="527.50" stroke="#e3e3e3" stroke-width="0.8"/>
<line x1="321.86" y1="130.80" x2="321.86" y2="527.50" stroke="#e3e3e3" stroke-width="0.8"/>
<line x1="361.68" y1="130.80" x2="361.68" y2="527.50" stroke="#e3e3e3" stroke-width="0.8"/>
<line x1="401.50" y1="130.80" x2="401.50" y2="527.50" stroke="#e3e3e3" stroke-width="0.8"/>
<line x1="441.32" y1="130.80" x2="441.32" y2="527.50" stroke="#e3e3e3" stroke-width="0.8"/>
<line x1="481.14" y1="130.80" x2="481.14" y2="527.50" stroke="#e3e3e3" stroke-width="0.8"/>
<line x1="520.96" y1="130.80" x2="520.96" y2="527.50" stroke="#e3e3e3" stroke-width="0.8"/>
<line x1="560.78" y1="130.80" x2="560.78" y2="527.50" stroke="#e3e3e3" stroke-width="0.8"/>
<line x1="600.60" y1="130.80" x2="600.60" y2="527.50" stroke="#e3e3e3" stroke-width="0.8"/>
<line x1="640.42" y1="130.80" x2="640.42" y2="527.50" stroke="#e3e3e3" stroke-width="0.8"/>
<line x1="680.24" y1="130.80" x2="680.24" y2="527.50" stroke="#e3e3e3" stroke-width="0.8"/>
<line x1="720.06" y1="130.80" x2="720.06" y2="527.50" stroke="#e3e3e3" stroke-width="0.8"/>
<line x1="759.88" y1="130.80" x2="759.88" y2="527.50" stroke="#e3e3e3" stroke-width="0.8"/>
<line x1="799.70" y1="130.80" x2="799.70" y2="527.50" stroke="#e3e3e3" stroke-width="0.8"/>
<line x1="839.52" y1="130.80" x2="839.52" y2="527.50" stroke="#e3e3e3" stroke-width="0.8"/>
<line x1="879.34" y1="130.80" x2="879.34" y2="527.50" stroke="#e3e3e3" stroke-width="0.8"/>
<line x1="919.16" y1="130.80" x2="919.16" y2="527.50" stroke="#e3e3e3" stroke-width="0.8"/>
<line x1="96.70" y1="151.90" x2="932.40" y2="151.90" stroke="#e3e3e3" stroke-width="0.8"/>
<line x1="96.70" y1="166.00" x2="932.40" y2="166.00" stroke="#e3e3e3" stroke-width="0.8"/>
<line x1="96.70" y1="196.25" x2="932.40" y2="196.25" stroke="#e3e3e3" stroke-width="0.8"/>
<line x1="96.70" y1="210.05" x2="932.40" y2="210.05" stroke="#e3e3e3" stroke-width="0.8"/>
<line x1="96.70" y1="223.85" x2="932.40" y2="223.85" stroke="#e3e3e3" stroke-width="0.8"/>
<line x1="96.70" y1="237.65" x2="932.40" y2="237.65" stroke="#e3e3e3" stroke-width="0.8"/>
<line x1="96.70" y1="251.45" x2="932.40" y2="251.45" stroke="#e3e3e3" stroke-width="0.8"/>
<line x1="96.70" y1="265.25" x2="932.40" y2="265.25" stroke="#e3e3e3" stroke-width="0.8"/>
<line x1="96.70" y1="279.05" x2="932.40" y2="279.05" stroke="#e3e3e3" stroke-width="0.8"/>
<line x1="96.70" y1="292.85" x2="932.40" y2="292.85" stroke="#e3e3e3" stroke-width="0.8"/>
<line x1="96.70" y1="306.65" x2="932.40" y2="306.65" stroke="#e3e3e3" stroke-width="0.8"/>
<line x1="96.70" y1="320.45" x2="932.40" y2="320.45" stroke="#e3e3e3" stroke-width="0.8"/>
<line x1="96.70" y1="334.25" x2="932.40" y2="334.25" stroke="#e3e3e3" stroke-width="0.8"/>
<line x1="96.70" y1="348.05" x2="932.40" y2="348.05" stroke="#e3e3e3" stroke-width="0.8"/>
<line x1="96.70" y1="361.85" x2="932.40" y2="361.85" stroke="#e3e3e3" stroke-width="0.8"/>
<line x1="96.70" y1="375.65" x2="932.40" y2="375.65" stroke="#e3e3e3" stroke-width="0.8"/>
<line x1="96.70" y1="389.45" x2="932.40" y2="389.45" stroke="#e3e3e3" stroke-width="0.8"/>
<line x1="96.70" y1="403.25" x2="932.40" y2="403.25" stroke="#e3e3e3" stroke-width="0.8"/>
<line x1="96.70" y1="417.05" x2="932.40" y2="417.05" stroke="#e3e3e3" stroke-width="0.8"/>
<line x1="96.70" y1="430.85" x2="932.40" y2="430.85" stroke="#e3e3e3" stroke-width="0.8"/>
<line x1="96.70" y1="444.65" x2="932.40" y2="444.65" stroke="#e3e3e3" stroke-width="0.8"/>
<line x1="96.70" y1="458.45" x2="932.40" y2="458.45" stroke="#e3e3e3" stroke-width="0.8"/>
<line x1="96.70" y1="472.25" x2="932.40" y2="472.25" stroke="#e3e3e3" stroke-width="0.8"/>
<line x1="96.70" y1="486.05" x2="932.40" y2="486.05" stroke="#e3e3e3" stroke-width="0.8"/>
<line x1="96.70" y1="499.85" x2="932.40" y2="499.85" stroke="#e3e3e3" stroke-width="0.8"/>
<line x1="96.70" y1="513.65" x2="932.40" y2="513.65" stroke="#e3e3e3" stroke-width="0.8"/>
<line x1="96.70" y1="527.45" x2="932.40" y2="527.45" stroke="#e3e3e3" stroke-width="0.8"/>
<line x1="96.70" y1="118.50" x2="96.70" y2="130.80" stroke="#d2d2d2" stroke-width="0.7"/>
<line x1="202.40" y1="118.50" x2="202.40" y2="130.80" stroke="#d2d2d2" stroke-width="0.7"/>
<line x1="242.22" y1="118.50" x2="242.22" y2="130.80" stroke="#d2d2d2" stroke-width="0.7"/>
<line x1="282.04" y1="118.50" x2="282.04" y2="130.80" stroke="#d2d2d2" stroke-width="0.7"/>
<line x1="321.86" y1="118.50" x2="321.86" y2="130.80" stroke="#d2d2d2" stroke-width="0.7"/>
<line x1="361.68" y1="118.50" x2="361.68" y2="130.80" stroke="#d2d2d2" stroke-width="0.7"/>
<line x1="401.50" y1="118.50" x2="401.50" y2="130.80" stroke="#d2d2d2" stroke-width="0.7"/>
<line x1="441.32" y1="118.50" x2="441.32" y2="130.80" stroke="#d2d2d2" stroke-width="0.7"/>
<line x1="481.14" y1="118.50" x2="481.14" y2="130.80" stroke="#d2d2d2" stroke-width="0.7"/>
<line x1="520.96" y1="118.50" x2="520.96" y2="130.80" stroke="#d2d2d2" stroke-width="0.7"/>
<line x1="560.78" y1="118.50" x2="560.78" y2="130.80" stroke="#d2d2d2" stroke-width="0.7"/>
<line x1="600.60" y1="118.50" x2="600.60" y2="130.80" stroke="#d2d2d2" stroke-width="0.7"/>
<line x1="640.42" y1="118.50" x2="640.42" y2="130.80" stroke="#d2d2d2" stroke-width="0.7"/>
<line x1="680.24" y1="118.50" x2="680.24" y2="130.80" stroke="#d2d2d2" stroke-width="0.7"/>
<line x1="720.06" y1="118.50" x2="720.06" y2="130.80" stroke="#d2d2d2" stroke-width="0.7"/>
<line x1="759.88" y1="118.50" x2="759.88" y2="130.80" stroke="#d2d2d2" stroke-width="0.7"/>
<line x1="799.70" y1="118.50" x2="799.70" y2="130.80" stroke="#d2d2d2" stroke-width="0.7"/>
<line x1="839.52" y1="118.50" x2="839.52" y2="130.80" stroke="#d2d2d2" stroke-width="0.7"/>
<line x1="879.34" y1="118.50" x2="879.34" y2="130.80" stroke="#d2d2d2" stroke-width="0.7"/>
<line x1="919.16" y1="118.50" x2="919.16" y2="130.80" stroke="#d2d2d2" stroke-width="0.7"/>
<line x1="80.00" y1="130.80" x2="96.70" y2="130.80" stroke="#d2d2d2" stroke-width="0.7"/>
<line x1="80.00" y1="151.90" x2="96.70" y2="151.90" stroke="#d2d2d2" stroke-width="0.7"/>
<line x1="80.00" y1="166.00" x2="96.70" y2="166.00" stroke="#d2d2d2" stroke-width="0.7"/>
<line x1="80.00" y1="196.25" x2="96.70" y2="196.25" stroke="#d2d2d2" stroke-width="0.7"/>
<line x1="80.00" y1="210.05" x2="96.70" y2="210.05" stroke="#d2d2d2" stroke-width="0.7"/>
<line x1="80.00" y1="223.85" x2="96.70" y2="223.85" stroke="#d2d2d2" stroke-width="0.7"/>
<line x1="80.00" y1="237.65" x2="96.70" y2="237.65" stroke="#d2d2d2" stroke-width="0.7"/>
<line x1="80.00" y1="251.45" x2="96.70" y2="251.45" stroke="#d2d2d2" stroke-width="0.7"/>
<line x1="80.00" y1="265.25" x2="96.70" y2="265.25" stroke="#d2d2d2" stroke-width="0.7"/>
<line x1="80.00" y1="279.05" x2="96.70" y2="279.05" stroke="#d2d2d2" stroke-width="0.7"/>
<line x1="80.00" y1="292.85" x2="96.70" y2="292.85" stroke="#d2d2d2" stroke-width="0.7"/>
<line x1="80.00" y1="306.65" x2="96.70" y2="306.65" stroke="#d2d2d2" stroke-width="0.7"/>
<line x1="80.00" y1="320.45" x2="96.70" y2="320.45" stroke="#d2d2d2" stroke-width="0.7"/>
<line x1="80.00" y1="334.25" x2="96.70" y2="334.25" stroke="#d2d2d2" stroke-width="0.7"/>
<line x1="80.00" y1="348.05" x2="96.70" y2="348.05" stroke="#d2d2d2" stroke-width="0.7"/>
<line x1="80.00" y1="361.85" x2="96.70" y2="361.85" stroke="#d2d2d2" stroke-width="0.7"/>
<line x1="80.00" y1="375.65" x2="96.70" y2="375.65" stroke="#d2d2d2" stroke-width="0.7"/>
<line x1="80.00" y1="389.45" x2="96.70" y2="389.45" stroke="#d2d2d2" stroke-width="0.7"/>
<line x1="80.00" y1="403.25" x2="96.70" y2="403.25" stroke="#d2d2d2" stroke-width="0.7"/>
<line x1="80.00" y1="417.05" x2="96.70" y2="417.05" stroke="#d2d2d2" stroke-width="0.7"/>
<line x1="80.00" y1="430.85" x2="96.70" y2="430.85" stroke="#d2d2d2" stroke-width="0.7"/>
<line x1="80.00" y1="444.65" x2="96.70" y2="444.65" stroke="#d2d2d2" stroke-width="0.7"/>
<line x1="80.00" y1="458.45" x2="96.70" y2="458.45" stroke="#d2d2d2" stroke-width="0.7"/>
<line x1="80.00" y1="472.25" x2="96.70" y2="472.25" stroke="#d2d2d2" stroke-width="0.7"/>
<line x1="80.00" y1="486.05" x2="96.70" y2="486.05" stroke="#d2d2d2" stroke-width="0.7"/>
<line x1="80.00" y1="499.85" x2="96.70" y2="499.85" stroke="#d2d2d2" stroke-width="0.7"/>
<line x1="80.00" y1="513.65" x2="96.70" y2="513.65" stroke="#d2d2d2" stroke-width="0.7"/>
<line x1="80.00" y1="527.45" x2="96.70" y2="527.45" stroke="#d2d2d2" stroke-width="0.7"/>
<line x1="80.00" y1="130.80" x2="932.40" y2="130.80" stroke="#c4c4c4" stroke-width="0.8"/>
<line x1="96.70" y1="117.60" x2="96.70" y2="527.50" stroke="#c4c4c4" stroke-width="0.8"/>
<path d="M95 119.2v10.2h-10z" fill="#bdbdbd" />
<text x="149.55" y="127.40" font-size="8.6" fill="#444" text-anchor="middle">A</text>
<text x="222.31" y="127.40" font-size="8.6" fill="#444" text-anchor="middle">B</text>
<text x="262.13" y="127.40" font-size="8.6" fill="#444" text-anchor="middle">C</text>
<text x="301.95" y="127.40" font-size="8.6" fill="#444" text-anchor="middle">D</text>
<text x="341.77" y="127.40" font-size="8.6" fill="#444" text-anchor="middle">E</text>
<text x="381.59" y="127.40" font-size="8.6" fill="#444" text-anchor="middle">F</text>
<text x="421.41" y="127.40" font-size="8.6" fill="#217346" text-anchor="middle">G</text>
<text x="461.23" y="127.40" font-size="8.6" fill="#444" text-anchor="middle">H</text>
<text x="501.05" y="127.40" font-size="8.6" fill="#444" text-anchor="middle">I</text>
<text x="540.87" y="127.40" font-size="8.6" fill="#444" text-anchor="middle">J</text>
<text x="580.69" y="127.40" font-size="8.6" fill="#444" text-anchor="middle">K</text>
<text x="620.51" y="127.40" font-size="8.6" fill="#444" text-anchor="middle">L</text>
<text x="660.33" y="127.40" font-size="8.6" fill="#444" text-anchor="middle">M</text>
<text x="700.15" y="127.40" font-size="8.6" fill="#444" text-anchor="middle">N</text>
<text x="739.97" y="127.40" font-size="8.6" fill="#444" text-anchor="middle">O</text>
<text x="779.79" y="127.40" font-size="8.6" fill="#444" text-anchor="middle">P</text>
<text x="819.61" y="127.40" font-size="8.6" fill="#444" text-anchor="middle">Q</text>
<text x="859.43" y="127.40" font-size="8.6" fill="#444" text-anchor="middle">R</text>
<text x="899.25" y="127.40" font-size="8.6" fill="#444" text-anchor="middle">S</text>
<text x="88.40" y="147.82" font-size="8.4" fill="#444" text-anchor="middle">1</text>
<text x="88.40" y="162.17" font-size="8.4" fill="#444" text-anchor="middle">2</text>
<text x="88.40" y="191.62" font-size="8.4" fill="#444" text-anchor="middle">3</text>
<text x="88.40" y="206.37" font-size="8.4" fill="#444" text-anchor="middle">4</text>
<text x="88.40" y="220.17" font-size="8.4" fill="#444" text-anchor="middle">5</text>
<text x="88.40" y="233.97" font-size="8.4" fill="#444" text-anchor="middle">6</text>
<text x="88.40" y="247.77" font-size="8.4" fill="#444" text-anchor="middle">7</text>
<text x="88.40" y="261.57" font-size="8.4" fill="#217346" text-anchor="middle">8</text>
<text x="88.40" y="275.37" font-size="8.4" fill="#444" text-anchor="middle">9</text>
<text x="88.40" y="289.17" font-size="8.4" fill="#444" text-anchor="middle">10</text>
<text x="88.40" y="302.97" font-size="8.4" fill="#444" text-anchor="middle">11</text>
<text x="88.40" y="316.77" font-size="8.4" fill="#444" text-anchor="middle">12</text>
<text x="88.40" y="330.57" font-size="8.4" fill="#444" text-anchor="middle">13</text>
<text x="88.40" y="344.37" font-size="8.4" fill="#444" text-anchor="middle">14</text>
<text x="88.40" y="358.17" font-size="8.4" fill="#444" text-anchor="middle">15</text>
<text x="88.40" y="371.97" font-size="8.4" fill="#444" text-anchor="middle">16</text>
<text x="88.40" y="385.77" font-size="8.4" fill="#444" text-anchor="middle">17</text>
<text x="88.40" y="399.57" font-size="8.4" fill="#444" text-anchor="middle">18</text>
<text x="88.40" y="413.37" font-size="8.4" fill="#444" text-anchor="middle">19</text>
<text x="88.40" y="427.17" font-size="8.4" fill="#444" text-anchor="middle">20</text>
<text x="88.40" y="440.97" font-size="8.4" fill="#444" text-anchor="middle">21</text>
<text x="88.40" y="454.77" font-size="8.4" fill="#444" text-anchor="middle">22</text>
<text x="88.40" y="468.57" font-size="8.4" fill="#444" text-anchor="middle">23</text>
<text x="88.40" y="482.37" font-size="8.4" fill="#444" text-anchor="middle">24</text>
<text x="88.40" y="496.17" font-size="8.4" fill="#444" text-anchor="middle">25</text>
<text x="88.40" y="509.97" font-size="8.4" fill="#444" text-anchor="middle">26</text>
<text x="88.40" y="523.77" font-size="8.4" fill="#444" text-anchor="middle">27</text>
<rect x="97.30" y="166.60" width="223.96" height="29.10" fill="#fff"/>
<text x="98.00" y="145.20" font-size="8.9" fill="#333">Excel</text>
<text x="120.20" y="144.99" font-size="8.1" fill="#333" textLength="73.1" lengthAdjust="spacingAndGlyphs">基本となる操作方法</text>
<text x="204.00" y="145.20" font-size="8.9" fill="#333">B</text>
<text x="211.20" y="145.20" font-size="8.9" fill="#333">1</text>
<text x="99.30" y="186.96" font-size="18.5" fill="#333" letter-spacing="-0.12">Excel</text>
<text x="144.20" y="187.34" font-size="18.3" fill="#333" textLength="164.8" lengthAdjust="spacingAndGlyphs">基本となる操作方法</text>
<rect x="401.70" y="251.55" width="40.02" height="14.10" fill="none" stroke="#3d7d5d" stroke-width="1.0"/>
<rect x="440.02" y="264.05" width="2.80" height="2.80" fill="#1e6c46" stroke="#fff" stroke-width="0.5"/>
<circle cx="426.2" cy="256.4" r="7.3" fill="#f08a78" opacity="0.92"/>
<path d="M424.9 252.6h2.6v2.5h2.5v2.6h-2.5v2.5h-2.6v-2.5h-2.5v-2.6h2.5z" fill="#fff" stroke="#555" stroke-width="0.7" />
<rect x="932.40" y="117.60" width="11.60" height="410.00" fill="#e9e9e9"/>
<rect x="933.50" y="127.60" width="9.20" height="377.60" fill="#fff" stroke="#c8c8c8" stroke-width="0.6"/>
<rect x="933.50" y="118.20" width="9.20" height="9.40" fill="#fff" stroke="#c8c8c8" stroke-width="0.6"/>
<path d="M936.40 123.80h3.60l-1.80 -2.00z" fill="#555" />
<rect x="933.50" y="516.60" width="9.20" height="9.20" fill="#fff" stroke="#c8c8c8" stroke-width="0.6"/>
<path d="M936.40 520.40h3.60l-1.80 2.00z" fill="#555" />
<rect x="80.00" y="527.50" width="864.00" height="13.20" fill="#e6e6e6"/>
<line x1="80.00" y1="527.60" x2="944.00" y2="527.60" stroke="#c4c4c4" stroke-width="0.8"/>
<path d="M92.6 532.4l-1.6 1.8 1.6 1.8" fill="none" stroke="#aaa" stroke-width="0.7" />
<path d="M103 532.4l1.6 1.8-1.6 1.8" fill="none" stroke="#aaa" stroke-width="0.7" />
<rect x="121.80" y="527.50" width="37.40" height="11.40" fill="#fff"/>
<line x1="121.80" y1="538.90" x2="159.20" y2="538.90" stroke="#2f7d57" stroke-width="1.0"/>
<text x="127.00" y="536.28" font-size="8.0" fill="#217346" letter-spacing="-0.05">Sheet1</text>
<circle cx="176.8" cy="534.4" r="3.5" fill="none" stroke="#777" stroke-width="0.7"/>
<path d="M174.8 534.4h4M176.8 532.4v4" fill="none" stroke="#777" stroke-width="0.7" />
<circle cx="596.6" cy="531.8" r="0.45" fill="#888"/>
<circle cx="596.6" cy="533.8" r="0.45" fill="#888"/>
<circle cx="596.6" cy="535.8" r="0.45" fill="#888"/>
<rect x="602.00" y="529.40" width="9.60" height="9.60" fill="#fff" stroke="#c8c8c8" stroke-width="0.6"/>
<path d="M608 532.2v4l-2.6-2z" fill="#555" />
<rect x="612.40" y="529.40" width="294.60" height="9.60" fill="#fff" stroke="#c8c8c8" stroke-width="0.6"/>
<rect x="924.20" y="529.60" width="8.20" height="9.20" fill="#fff" stroke="#c8c8c8" stroke-width="0.6"/>
<path d="M927 532.2v4l2.6-2z" fill="#555" />
<rect x="80.00" y="540.70" width="864.00" height="12.60" fill="#f3f3f3"/>
<line x1="80.00" y1="540.70" x2="944.00" y2="540.70" stroke="#cdcdcd" stroke-width="0.8"/>
<text x="84.60" y="549.25" font-size="6.5" fill="#444" textLength="26.4" lengthAdjust="spacingAndGlyphs">準備完了</text>
<rect x="721.40" y="543.40" width="7.00" height="5.00" fill="#555"/>
<line x1="723.00" y1="549.60" x2="726.80" y2="549.60" stroke="#555" stroke-width="0.8"/>
<circle cx="728.4" cy="549.4" r="1.6" fill="#555" stroke="#f3f3f3" stroke-width="0.5"/>
<text x="731.60" y="549.25" font-size="6.5" fill="#444" textLength="26.6" lengthAdjust="spacingAndGlyphs">表示設定</text>
<rect x="768.00" y="541.20" width="24.00" height="11.60" fill="#d0d0d0"/>
<rect x="776.00" y="543.20" width="8.00" height="6.60" fill="none" stroke="#666" stroke-width="0.6"/>
<line x1="778.67" y1="543.20" x2="778.67" y2="549.80" stroke="#666" stroke-width="0.6"/>
<line x1="781.33" y1="543.20" x2="781.33" y2="549.80" stroke="#666" stroke-width="0.6"/>
<line x1="776.00" y1="545.40" x2="784.00" y2="545.40" stroke="#666" stroke-width="0.6"/>
<line x1="776.00" y1="547.60" x2="784.00" y2="547.60" stroke="#666" stroke-width="0.6"/>
<rect x="799.40" y="543.20" width="7.60" height="6.80" fill="none" stroke="#666" stroke-width="0.6"/>
<rect x="801.40" y="543.20" width="3.60" height="6.80" fill="none" stroke="#666" stroke-width="0.5"/>
<rect x="822.40" y="543.20" width="7.60" height="6.80" fill="none" stroke="#666" stroke-width="0.6"/>
<path d="M825 543.2v3h3v-3" fill="none" stroke="#666" stroke-width="0.5" />
<text x="842.40" y="549.28" font-size="8" fill="#666">-</text>
<line x1="849.40" y1="546.80" x2="907.50" y2="546.80" stroke="#999" stroke-width="0.7"/>
<rect x="875.80" y="543.40" width="1.90" height="6.60" fill="#444"/>
<text x="908.20" y="549.48" font-size="8" fill="#666">+</text>
<text x="921.00" y="549.46" font-size="7.4" fill="#555">100%</text>
<rect x="80.00" y="553.30" width="864.00" height="22.70" fill="#253648"/>
<rect x="80.00" y="553.30" width="27.50" height="22.70" fill="#1c2a39"/>
<path d="M89 561.4l4.2-.6v4h-4.2zM93.8 560.7l5-.7v4.8h-5zM89 565.4h4.2v4l-4.2-.6zM93.8 565.4h5v4.8l-5-.7z" fill="#fff" />
<rect x="107.50" y="553.30" width="197.50" height="22.70" fill="#e9e9e9"/>
<circle cx="120.4" cy="563.6" r="2.7" fill="none" stroke="#222" stroke-width="0.9"/>
<line x1="118.40" y1="565.80" x2="116.00" y2="568.60" stroke="#222" stroke-width="0.9"/>
<text x="131.00" y="567.94" font-size="7.2" fill="#333" textLength="64.4" lengthAdjust="spacingAndGlyphs">ここに入力して検索</text>
<circle cx="318.8" cy="564.6" r="3.9" fill="none" stroke="#fff" stroke-width="1.1"/>
<rect x="343.80" y="562.00" width="5.60" height="5.60" fill="none" stroke="#aaa" stroke-width="0.8"/>
<line x1="342.00" y1="561.00" x2="342.00" y2="568.60" stroke="#aaa" stroke-width="0.8"/>
<line x1="351.20" y1="561.00" x2="351.20" y2="568.60" stroke="#aaa" stroke-width="0.8"/>
<line x1="342.00" y1="563.00" x2="343.80" y2="563.00" stroke="#aaa" stroke-width="0.7"/>
<line x1="342.00" y1="566.60" x2="343.80" y2="566.60" stroke="#aaa" stroke-width="0.7"/>
<line x1="349.40" y1="563.00" x2="351.20" y2="563.00" stroke="#aaa" stroke-width="0.7"/>
<line x1="349.40" y1="566.60" x2="351.20" y2="566.60" stroke="#aaa" stroke-width="0.7"/>
<rect x="370.00" y="558.80" width="12.60" height="11.00" fill="#3f8edb"/>
<path d="M370 569.8l4.4-5.4 3 3.2 2-1.8 3.2 4z" fill="#1b4f94" />
<circle cx="379" cy="561.8" r="1" fill="#fff"/>
<rect x="398.60" y="559.40" width="12.40" height="10.40" fill="#f4c64c"/>
<rect x="398.60" y="558.60" width="5.00" height="2.00" fill="#e0a82e"/>
<rect x="401.40" y="564.00" width="6.80" height="5.80" fill="#4aa3e8"/>
<rect x="403.00" y="566.20" width="3.60" height="3.60" fill="#f4c64c"/>
<rect x="426.80" y="560.60" width="12.20" height="10.00" fill="#f2f2f2"/>
<path d="M430 560.6v-1.6q0-1.4 2.9-1.4t2.9 1.4v1.6" fill="none" stroke="#f2f2f2" stroke-width="0.9" />
<rect x="430.60" y="563.40" width="2.00" height="2.00" fill="#e8503a"/>
<rect x="433.20" y="563.40" width="2.00" height="2.00" fill="#7dba3a"/>
<rect x="430.60" y="566.00" width="2.00" height="2.00" fill="#3f8edb"/>
<rect x="433.20" y="566.00" width="2.00" height="2.00" fill="#f4c64c"/>
<circle cx="462.4" cy="564.4" r="6" fill="#2a8fd6"/>
<path d="M457 566a5.6 5.6 0 0 1 10.8-3.4q-2-1.8-5-1-2.6.8-2.4 3.4.2 2.4 3.2 3-4.2 1.2-6.6-2z" fill="#5cd08a" />
<circle cx="463.6" cy="565.4" r="2" fill="#1c2a39"/>
<rect x="484.40" y="560.60" width="13.60" height="9.40" fill="#2a8fd6"/>
<path d="M484.4 560.6l6.8-3.6 6.8 3.6-6.8 4.6z" fill="#1763a6" />
<path d="M484.4 561l6.8 4.6 6.8-4.6" fill="none" stroke="#9fd0f5" stroke-width="0.7" />
<path d="M514 560l10-1.6 2 10-11 2z" fill="#9fc4d8" />
<circle cx="548" cy="564.4" r="6.4" fill="#e6d400"/>
<path d="M577 557.6l1.6 4.6 4.8.2-3.8 3 1.4 4.6-4-2.8-4 2.8 1.4-4.6-3.8-3 4.8-.2z" fill="#6a8fc4" />
<path d="M578 563l4.6 4.2-2 .2 1.2 2.4-1 .5-1.2-2.4-1.6 1.3z" fill="#fff" />
<rect x="599.60" y="558.00" width="13.00" height="13.00" fill="#14202c"/>
<path d="M603 566l5-4.6 2 2-5 4.6z" fill="#3ad0b0" />
<rect x="605.40" y="559.80" width="2.00" height="2.00" fill="#fff"/>
<rect x="621.40" y="553.30" width="29.20" height="22.70" fill="#3a4b5e"/>
<rect x="629.60" y="558.60" width="11.80" height="11.60" fill="#1d6f42"/>
<rect x="627.40" y="560.60" width="7.20" height="7.60" fill="#107c41"/>
<text x="629.40" y="566.42" font-size="5.6" fill="#fff" font-weight="bold">x</text>
<rect x="656.60" y="559.00" width="10.60" height="9.00" fill="#2ea3c4" rx="1.2"/>
<path d="M667.2 562l3.6-2v7l-3.6-2z" fill="#2ea3c4" />
<circle cx="661.6" cy="563.2" r="2.4" fill="#d93030"/>
<line x1="659.00" y1="570.40" x2="664.60" y2="570.40" stroke="#2ea3c4" stroke-width="0.9"/>
<line x1="537.00" y1="575.50" x2="560.00" y2="575.50" stroke="#8fb8e0" stroke-width="1.0"/>
<line x1="594.60" y1="575.50" x2="617.60" y2="575.50" stroke="#8fb8e0" stroke-width="1.0"/>
<line x1="621.40" y1="575.50" x2="650.60" y2="575.50" stroke="#8fb8e0" stroke-width="1.0"/>
<line x1="652.60" y1="575.50" x2="675.60" y2="575.50" stroke="#8fb8e0" stroke-width="1.0"/>
<path d="M708.4 566.2l3.4-3.2 3.4 3.2" fill="none" stroke="#fff" stroke-width="0.8" />
<path d="M727 563.4h1.6l2.2-2v6.4l-2.2-2h-1.6z" fill="#fff" />
<path d="M732.4 562.6q1.2 1.8 0 3.8M733.8 561.4q2 3 0 6" fill="none" stroke="#fff" stroke-width="0.6" />
<rect x="746.40" y="561.60" width="4.00" height="5.60" fill="none" stroke="#fff" stroke-width="0.7"/>
<text x="883.40" y="562.12" font-size="7.0" fill="#fff">11:59</text>
<text x="873.80" y="571.76" font-size="7.1" fill="#fff">2021/04/17</text>
<path d="M919.6 560.4h9v6.4h-3l-1.6 1.8v-1.8h-4.4z" fill="none" stroke="#fff" stroke-width="0.8" />
<line x1="921.40" y1="562.60" x2="926.80" y2="562.60" stroke="#fff" stroke-width="0.6"/>
<line x1="921.40" y1="564.40" x2="925.40" y2="564.40" stroke="#fff" stroke-width="0.6"/>
<text x="753.20" y="570.24" font-size="17.9" fill="#fff" opacity="0.6">©-2021 saym.</text>
<linearGradient id="ov" x1="0" y1="0" x2="0" y2="1"><stop offset="0" stop-color="#000" stop-opacity="0"/><stop offset="0.16" stop-color="#000" stop-opacity="0.14"/><stop offset="0.3" stop-color="#000" stop-opacity="0.29"/><stop offset="0.44" stop-color="#000" stop-opacity="0.41"/><stop offset="0.55" stop-color="#000" stop-opacity="0.48"/><stop offset="0.72" stop-color="#000" stop-opacity="0.52"/><stop offset="1" stop-color="#000" stop-opacity="0.57"/></linearGradient>
<rect x="0.00" y="468.00" width="1024.00" height="108.00" fill="url(#ov)"/>
<path d="M16 8.1h-5.6M12.9 5.3l-2.8 2.8 2.8 2.8" fill="none" stroke="#ddd" stroke-width="1.1" />
<path d="M11 281.9l-6.4 6.1 6.4 6.1" fill="none" stroke="#bdbdbd" stroke-width="1.0" />
<path d="M1013.2 281.9l6.3 6.1-6.3 6.1" fill="none" stroke="#bdbdbd" stroke-width="1.0" />
<line x1="13.00" y1="516.90" x2="1011.00" y2="516.90" stroke="#8a8a8a" stroke-width="0.9"/>
<line x1="13.00" y1="516.90" x2="689.60" y2="516.90" stroke="#5cb9ee" stroke-width="1.25"/>
<circle cx="694.7" cy="516.9" r="4.6" fill="none" stroke="#58b7ec" stroke-width="1.2"/>
<text x="12.80" y="530.90" font-size="6.1" fill="#fff" letter-spacing="-0.05">0:06:22</text>
<text x="1010.80" y="530.90" font-size="6.1" fill="#fff" text-anchor="end" letter-spacing="-0.05">0:02:56</text>
<path d="M20.8 545h1.6l2.4-2.4v8l-2.4-2.4h-1.6z" fill="none" stroke="#fff" stroke-width="0.8" />
<path d="M26.4 545q.9 1.6 0 3.2M28.2 543.8q1.7 2.8 0 5.6M30 542.6q2.5 4 0 8" fill="none" stroke="#fff" stroke-width="0.7" />
<path d="M47.4 542.4h10.6v6.4h-6.8l-2 2.2v-2.2h-1.8z" fill="none" stroke="#fff" stroke-width="0.9" />
<line x1="48.80" y1="544.70" x2="56.80" y2="544.70" stroke="#fff" stroke-width="1.0"/>
<line x1="48.80" y1="546.70" x2="56.80" y2="546.70" stroke="#fff" stroke-width="1.0"/>
<path d="M480.6 545.6q5-6.6 10.2.6" fill="none" stroke="#fff" stroke-width="1.0" />
<path d="M480 542.6v3.4h3.4z" fill="#fff" />
<text x="482.40" y="551.35" font-size="5.7" fill="#fff" letter-spacing="-0.1">10</text>
<rect x="499.00" y="533.00" width="26.00" height="25.90" fill="#fff" opacity="0.17"/>
<path d="M509.4 542.2l6.4 4.2-6.4 4.2z" fill="none" stroke="#fff" stroke-width="0.9" />
<path d="M543.6 545.6q-5-6.6-10.2.6" fill="none" stroke="#fff" stroke-width="1.0" />
<path d="M544.2 542.6v3.4h-3.4z" fill="#fff" />
<text x="535.20" y="551.35" font-size="5.7" fill="#fff" letter-spacing="-0.1">30</text>
<path d="M913.4 551.2l1-3 5.6-5.8 2 2-5.6 5.8z" fill="none" stroke="#fff" stroke-width="0.9" />
<rect x="939.40" y="543.40" width="10.20" height="6.20" fill="none" stroke="#fff" stroke-width="1.0"/>
<rect x="943.60" y="545.40" width="4.60" height="2.60" fill="#fff"/>
<path d="M976.6 541.6l-3.6 3.6M973 542.4v2.8h2.8M966.6 551.6l3.6-3.6M970.2 550.8v-2.8h-2.8" fill="none" stroke="#fff" stroke-width="0.9" />
<circle cx="993.7" cy="546.6" r="0.75" fill="#fff"/>
<circle cx="997.9" cy="546.6" r="0.75" fill="#fff"/>
<circle cx="1002.1" cy="546.6" r="0.75" fill="#fff"/>
</g>
</svg>
</div>
</body></html>
